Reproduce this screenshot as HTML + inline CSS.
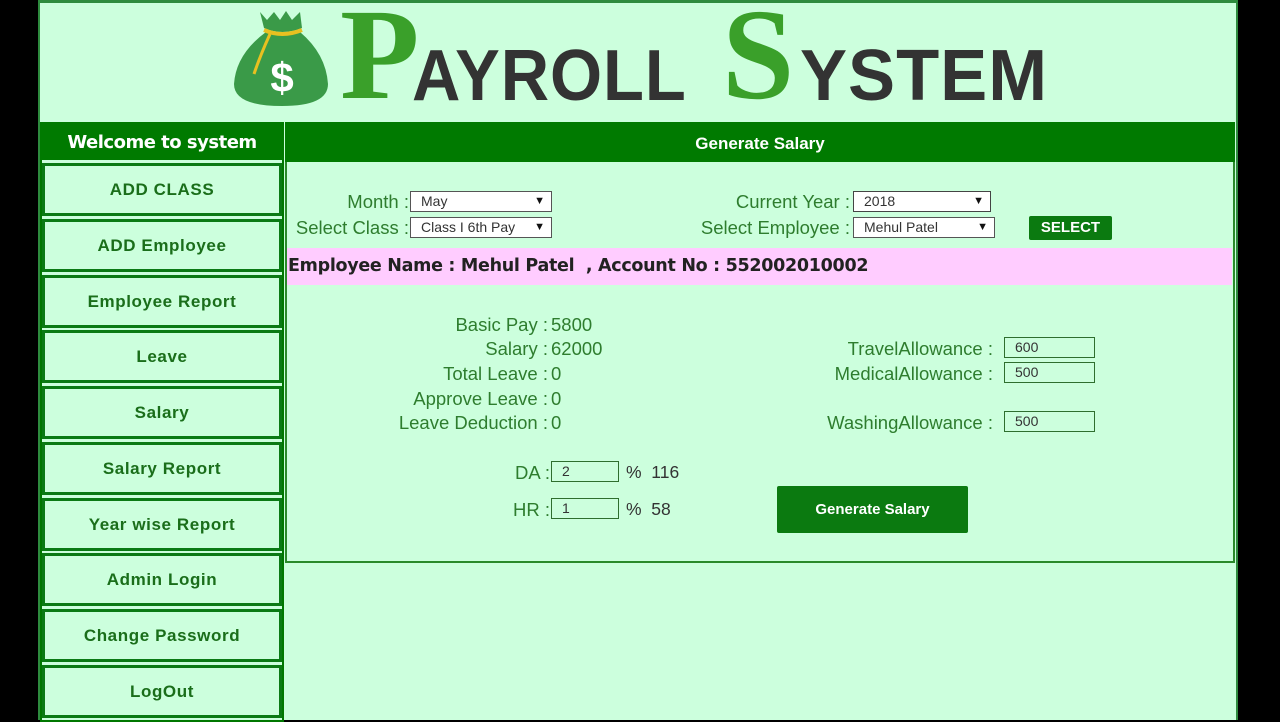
<!DOCTYPE html>
<html><head><meta charset="utf-8"><style>
*{margin:0;padding:0;box-sizing:border-box}
body{width:1280px;height:720px;background:#000;position:relative;overflow:hidden;font-family:"Liberation Sans",sans-serif}
.page{position:absolute;left:38px;top:0;width:1200px;height:720px;background:#ccffdd;border-left:2px solid #2e8b3e;border-right:2px solid #2e8b3e}
.a{position:absolute}
.side{position:absolute;left:40px;top:122px;width:244px;height:600px;border:2px solid #007700;border-top:none;background:#ccffdd}
.sh{position:absolute;left:40px;top:122px;width:244px;height:38px;background:#007a00;color:#fff;font-weight:bold;font-size:18px;text-align:center;line-height:42px;font-family:"DejaVu Sans",sans-serif;letter-spacing:-0.5px}
.mi{position:absolute;left:42px;width:240px;height:53px;border:3px solid #0a7a14;color:#1a6e1a;font-weight:bold;font-size:17px;letter-spacing:0.6px;text-align:center;line-height:48px;background:#ccffdd}
.main{position:absolute;left:285px;top:122px;width:950px;height:441px;border:2px solid #2a8a2a;border-top:none}
.mh{position:absolute;left:285px;top:122px;width:950px;height:40px;background:#007a00;color:#fff;font-weight:bold;font-size:17px;text-align:center;line-height:43px}
.l{position:absolute;color:#2e7d2e;font-size:18.5px;white-space:nowrap;font-family:"Liberation Sans",sans-serif}
.r{text-align:right}
.sel,.inp{position:absolute;background:#fff;border:1px solid #555;height:21px;font-size:14px;line-height:19px;padding-left:10px;color:#333}
.inp{background:#ccffdd;border:1.5px solid #2e6e2e}
.sel:after{content:"▼";position:absolute;right:6px;top:0;font-size:11px;color:#111}
</style></head><body>
<div class="page"></div>
<div class="a" style="left:38px;top:0;width:1200px;height:3px;background:#2e8b3e"></div>
<!-- logo -->
<svg class="a" style="left:230px;top:6px" width="104" height="104" viewBox="0 0 104 104">
<path d="M30 6 L37 14 L44 6 L50 14 L56 5 L62 14 L70 6 L72 22 Q52 30 34 22 Z" fill="#3a9a48"/>
<path d="M36 26 Q52 32 70 26 Q96 48 98 78 Q98 100 52 100 Q4 100 4 78 Q6 48 36 26 Z" fill="#3a9a48"/>
<path d="M34 24 Q52 32 72 24" stroke="#e8c020" stroke-width="4" fill="none"/>
<path d="M40 28 Q30 50 24 68" stroke="#e8c020" stroke-width="3" fill="none"/>
<text x="52" y="86" font-size="42" font-weight="bold" fill="#fff" text-anchor="middle" font-family="Liberation Sans">$</text>
</svg>
<div class="a" style="left:340px;top:-10px;font-family:'Liberation Serif',serif;font-weight:bold;font-size:130px;color:#3aa02a;line-height:1">P</div>
<div class="a" style="left:412px;top:40px;font-family:'Liberation Sans',sans-serif;font-weight:bold;font-size:72px;color:#333;line-height:1;letter-spacing:1px;transform:scaleX(0.93);transform-origin:left">AYROLL</div>
<div class="a" style="left:722px;top:-10px;font-family:'Liberation Serif',serif;font-weight:bold;font-size:130px;color:#3aa02a;line-height:1">S</div>
<div class="a" style="left:800px;top:40px;font-family:'Liberation Sans',sans-serif;font-weight:bold;font-size:72px;color:#333;line-height:1;letter-spacing:1px;transform:scaleX(0.98);transform-origin:left">YSTEM</div>

<div class="side"></div>
<div class="sh">Welcome to system</div>
<div class="mi" style="top:163px">ADD CLASS</div>
<div class="mi" style="top:219px">ADD Employee</div>
<div class="mi" style="top:275px">Employee Report</div>
<div class="mi" style="top:330px">Leave</div>
<div class="mi" style="top:386px">Salary</div>
<div class="mi" style="top:442px">Salary Report</div>
<div class="mi" style="top:498px">Year wise Report</div>
<div class="mi" style="top:553px">Admin Login</div>
<div class="mi" style="top:609px">Change Password</div>
<div class="mi" style="top:665px">LogOut</div>

<div class="main"></div>
<div class="mh">Generate Salary</div>

<div class="l r" style="right:871px;top:191px">Month :</div>
<div class="sel" style="left:410px;top:191px;width:142px">May</div>
<div class="l r" style="right:871px;top:217px">Select Class :</div>
<div class="sel" style="left:410px;top:217px;width:142px">Class I 6th Pay</div>
<div class="l r" style="right:430px;top:191px">Current Year :</div>
<div class="sel" style="left:853px;top:191px;width:138px;border-color:#444">2018</div>
<div class="l r" style="right:430px;top:217px">Select Employee :</div>
<div class="sel" style="left:853px;top:217px;width:142px">Mehul Patel</div>
<div class="a" style="left:1029px;top:216px;width:83px;height:24px;background:#0b7a10;color:#fff;font-weight:bold;font-size:15px;text-align:center;line-height:24px;border-radius:2px">SELECT</div>

<div class="a" style="left:287px;top:248px;width:945px;height:37px;background:#ffccff"></div>
<div class="a" style="left:288px;top:256px;font-weight:bold;font-size:17.5px;color:#222;font-family:'DejaVu Sans',sans-serif;letter-spacing:-0.3px">Employee Name : Mehul Patel &nbsp;, Account No : 552002010002</div>

<div class="l r" style="right:732px;top:314px">Basic Pay :</div><div class="l" style="left:551px;top:314px">5800</div>
<div class="l r" style="right:732px;top:338px">Salary :</div><div class="l" style="left:551px;top:338px">62000</div>
<div class="l r" style="right:732px;top:363px">Total Leave :</div><div class="l" style="left:551px;top:363px">0</div>
<div class="l r" style="right:732px;top:388px">Approve Leave :</div><div class="l" style="left:551px;top:388px">0</div>
<div class="l r" style="right:732px;top:412px">Leave Deduction :</div><div class="l" style="left:551px;top:412px">0</div>

<div class="l r" style="right:287px;top:338px">TravelAllowance :</div><div class="inp" style="left:1004px;top:337px;width:91px">600</div>
<div class="l r" style="right:287px;top:363px">MedicalAllowance :</div><div class="inp" style="left:1004px;top:362px;width:91px">500</div>
<div class="l r" style="right:287px;top:412px">WashingAllowance :</div><div class="inp" style="left:1004px;top:411px;width:91px">500</div>

<div class="l r" style="right:730px;top:462px">DA :</div><div class="inp" style="left:551px;top:461px;width:68px">2</div>
<div class="l" style="left:626px;top:462px;color:#333;font-size:17.5px">% &nbsp;116</div>
<div class="l r" style="right:730px;top:499px">HR :</div><div class="inp" style="left:551px;top:498px;width:68px">1</div>
<div class="l" style="left:626px;top:499px;color:#333;font-size:17.5px">% &nbsp;58</div>

<div class="a" style="left:777px;top:486px;width:191px;height:47px;background:#0b7a10;color:#fff;font-weight:bold;font-size:15px;text-align:center;line-height:47px;border-radius:2px">Generate Salary</div>
</body></html>
